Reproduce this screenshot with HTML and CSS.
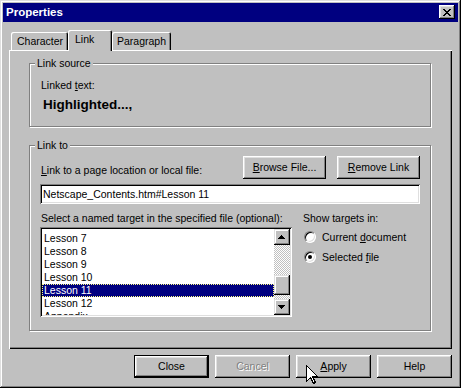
FILE: index.html
```html
<!DOCTYPE html>
<html>
<head>
<meta charset="utf-8">
<title>Properties</title>
<link rel="stylesheet" href="styles.css">
</head>
<body>
<div class="window">
  <div class="titlebar">
    <span class="title">Properties</span>
    <div class="close-btn">
      <svg width="8" height="7" viewBox="0 0 8 7" shape-rendering="crispEdges">
        <path d="M0 0h2v1h-2zM6 0h2v1h-2zM1 1h2v1h-2zM5 1h2v1h-2zM2 2h4v1h-4zM3 3h2v1h-2zM2 4h4v1h-4zM1 5h2v1h-2zM5 5h2v1h-2zM0 6h2v1h-2zM6 6h2v1h-2z" fill="#000"/>
      </svg>
    </div>
  </div>
  <div class="content">
    <div class="tabs">
      <div class="tab t-char">Character</div>
      <div class="tab t-link active">Link</div>
      <div class="tab t-para">Paragraph</div>
    </div>
    <div class="panel">
      <fieldset class="group g-source">
        <legend>Link source</legend>
        <div class="g-body src-body">
          <div class="label">Linked <u>t</u>ext:</div>
          <div class="highlight">Highlighted...,</div>
        </div>
      </fieldset>
      <fieldset class="group g-link">
        <legend>Link to</legend>
        <div class="g-body link-body">
          <div class="row1">
            <span class="label row1-label"><u>L</u>ink to a page location or local file:</span>
            <div class="row1-btns">
              <div class="btn w83"><u>B</u>rowse File...</div>
              <div class="btn w83"><u>R</u>emove Link</div>
            </div>
          </div>
          <div class="textbox">Netscape_Contents.htm#Lesson 11</div>
          <div class="row3">
            <div class="left-col">
              <div class="label">Select a named target in the specified file (optional):</div>
              <div class="listbox">
                <div class="items">
                  <div class="item">Lesson 7</div>
                  <div class="item">Lesson 8</div>
                  <div class="item">Lesson 9</div>
                  <div class="item">Lesson 10</div>
                  <div class="item sel">Lesson 11</div>
                  <div class="item">Lesson 12</div>
                  <div class="item">Appendix</div>
                </div>
                <div class="scrollbar">
                  <div class="sb-btn">
                    <svg width="7" height="4" viewBox="0 0 7 4" shape-rendering="crispEdges"><path d="M3 0h1v1h1v1h1v1h1v1h-7v-1h1v-1h1v-1h1z" fill="#000"/></svg>
                  </div>
                  <div class="sb-track-top"></div>
                  <div class="sb-thumb"></div>
                  <div class="sb-track-bottom"></div>
                  <div class="sb-btn">
                    <svg width="7" height="4" viewBox="0 0 7 4" shape-rendering="crispEdges"><path d="M0 0h7v1h-1v1h-1v1h-1v1h-1v-1h-1v-1h-1v-1h-1z" fill="#000"/></svg>
                  </div>
                </div>
              </div>
            </div>
            <div class="right-col">
              <div class="label">Show targets in:</div>
              <div class="radios">
                <div class="radio-row"><span class="radio"></span><span>Current <u>d</u>ocument</span></div>
                <div class="radio-row"><span class="radio checked"></span><span>Selected <u>f</u>ile</span></div>
              </div>
            </div>
          </div>
        </div>
      </fieldset>
    </div>
    <div class="footer">
      <div class="btn w75 default">Close</div>
      <div class="btn w75 disabled">Cancel</div>
      <div class="btn w75"><u>A</u>pply</div>
      <div class="btn w75">Help</div>
    </div>
  </div>
  <svg class="cursor" width="12" height="20" viewBox="0 0 12 20" shape-rendering="crispEdges">
    <path d="M0.5 0.5 L0.5 16.5 L4.5 12.5 L7.5 18.5 L9.5 17.5 L6.5 11.5 L11.5 11.5 Z" fill="#fff" stroke="#000" stroke-width="1"/>
  </svg>
</div>
</body>
</html>
```
FILE: styles.css
```css
* { box-sizing: border-box; }
html, body { margin: 0; padding: 0; }
body {
  width: 461px;
  height: 388px;
  overflow: hidden;
  background: #c0c0c0;
  font-family: "Liberation Sans", Arial, sans-serif;
  font-size: 10.5px;
  line-height: 13px;
  color: #000;
}
u { text-underline-offset: 1px; }

.window {
  position: relative;
  width: 461px;
  height: 388px;
  padding: 3px;
  background: #c0c0c0;
  box-shadow: inset -1px -1px #000, inset 1px 1px #dfdfdf, inset -2px -2px #808080, inset 2px 2px #fff;
  display: flex;
  flex-direction: column;
}

.titlebar {
  height: 19px;
  background: #000080;
  display: flex;
  align-items: flex-start;
  justify-content: space-between;
  padding: 2px 3px 0 3px;
}
.title {
  color: #fff;
  font-weight: bold;
  font-size: 11.5px;
  line-height: 15px;
}
.close-btn {
  width: 16px;
  height: 14px;
  background: #c0c0c0;
  box-shadow: inset -1px -1px #000, inset 1px 1px #fff, inset -2px -2px #808080, inset 2px 2px #dfdfdf;
  display: flex;
  align-items: center;
  justify-content: center;
  padding: 0 1px 0 0;
}
.close-btn svg { display: block; }

.content {
  flex: 1;
  display: flex;
  flex-direction: column;
  padding: 8px 6px 0 6px;
}

.tabs {
  display: flex;
  align-items: flex-end;
  height: 20px;
  padding-left: 2px;
}
.tab {
  height: 18px;
  padding: 3px 0 0 6px;
  background: #c0c0c0;
  border-radius: 2px 2px 0 0;
  box-shadow: inset 1px 1px #fff, inset -1px 0 #000, inset -2px 0 #808080;
  white-space: nowrap;
}
.t-char { width: 57px; }
.t-link { width: 44px; padding-left: 7px; }
.t-para { width: 59px; padding-left: 5px; }
.tab.active {
  height: 21px;
  margin-bottom: -1px;
  position: relative;
  z-index: 1;
}

.panel {
  height: 299px;
  background: #c0c0c0;
  box-shadow: inset 1px 1px #fff, inset -1px -1px #000, inset -2px -2px #808080;
  padding: 7px 21px 0 20px;
}

.group {
  margin: 0;
  padding: 0;
  border: 1px solid #808080;
  box-shadow: 1px 1px 0 #fff, inset 1px 1px 0 #fff;
  min-width: 0;
}
.group legend {
  margin-left: 5px;
  padding: 0 2px;
  line-height: 13px;
  background: #c0c0c0;
}
.g-link { margin-top: 12px; }

.src-body { padding: 9px 10px 13px 11px; }
.highlight {
  margin-top: 5px;
  margin-left: 2px;
  font-weight: bold;
  font-size: 13.5px;
  line-height: 16px;
}

.link-body { padding: 4px 10px 13px 10px; }
.row1 {
  display: flex;
  justify-content: space-between;
  align-items: flex-end;
}
.row1-label { margin: 0 0 2px 1px; }
.row1-btns { display: flex; gap: 11px; }

.btn {
  height: 23px;
  background: #c0c0c0;
  box-shadow: inset -1px -1px #000, inset 1px 1px #fff, inset -2px -2px #808080, inset 2px 2px #dfdfdf;
  display: flex;
  align-items: center;
  justify-content: center;
  white-space: nowrap;
  padding-bottom: 1px;
}
.w83 { width: 83px; }
.w75 { width: 75px; }
.btn.default {
  border: 1px solid #000;
}
.btn.disabled {
  color: #808080;
  text-shadow: 1px 1px 0 #fff;
}

.textbox {
  margin-top: 5px;
  height: 20px;
  background: #fff;
  box-shadow: inset 1px 1px #808080, inset -1px -1px #fff, inset 2px 2px #000, inset -2px -2px #dfdfdf;
  padding-left: 3px;
  line-height: 20px;
  white-space: nowrap;
}

.row3 {
  margin-top: 8px;
  display: flex;
  gap: 11px;
}
.left-col { width: 252px; }
.left-col .label { margin-left: 1px; white-space: nowrap; }
.listbox {
  margin-top: 2px;
  width: 252px;
  height: 90px;
  background: #fff;
  box-shadow: inset 1px 1px #808080, inset -1px -1px #fff, inset 2px 2px #000, inset -2px -2px #dfdfdf;
  padding: 2px;
  display: flex;
}
.items {
  flex: 1;
  overflow: hidden;
  padding-top: 3px;
}
.item {
  height: 13px;
  line-height: 13px;
  padding-left: 2px;
  white-space: nowrap;
}
.item.sel {
  background: #000080;
  color: #fff;
  outline: 1px dotted #ffff80;
  outline-offset: -1px;
}
.scrollbar {
  width: 16px;
  display: flex;
  flex-direction: column;
}
.sb-btn, .sb-thumb {
  background: #c0c0c0;
  box-shadow: inset -1px -1px #000, inset 1px 1px #dfdfdf, inset -2px -2px #808080, inset 2px 2px #fff;
}
.sb-btn {
  height: 16px;
  display: flex;
  align-items: center;
  justify-content: center;
  padding: 0 1px 1px 0;
}
.sb-btn svg { display: block; }
.sb-thumb { height: 20px; }
.sb-track-top, .sb-track-bottom {
  background-color: #fff;
  background-image: repeating-conic-gradient(#c0c0c0 0 25%, #fff 0 50%);
  background-size: 2px 2px;
}
.sb-track-top { height: 30px; }
.sb-track-bottom { height: 4px; }

.right-col { flex: 1; }
.radios { margin-top: 6px; }
.radio-row {
  height: 20px;
  display: flex;
  align-items: flex-start;
  gap: 6px;
  padding-left: 1px;
  white-space: nowrap;
}
.radio {
  width: 12px;
  height: 12px;
  border-radius: 50%;
  background: #fff;
  border: 1px solid;
  border-color: #808080 #fff #fff #808080;
  box-shadow: inset 1px 1px #000, inset -1px -1px #dfdfdf;
  display: flex;
  align-items: center;
  justify-content: center;
  margin-top: 0;
}
.radio.checked::after {
  content: "";
  width: 4px;
  height: 4px;
  border-radius: 50%;
  background: #000;
}

.footer {
  margin-top: 6px;
  display: flex;
  justify-content: flex-end;
  gap: 6px;
}

.cursor {
  position: absolute;
  left: 306px;
  top: 365px;
  display: block;
}
```
